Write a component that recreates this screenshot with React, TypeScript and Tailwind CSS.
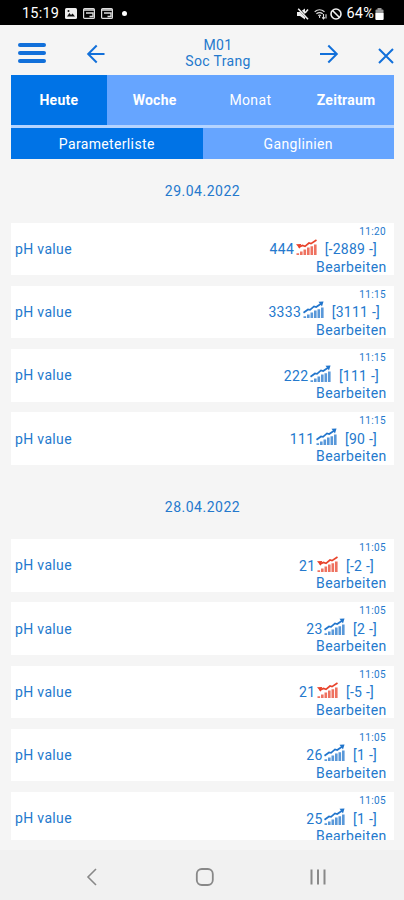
import React from 'react';

type Reading = { time: string; value: string; range: string; alert?: boolean; pad: string };

const days: { date: string; readings: Reading[] }[] = [
  {
    date: '29.04.2022',
    readings: [
      { time: '11:20', value: '444', range: '[-2889 -]', alert: true, pad: 'pr-[17px]' },
      { time: '11:15', value: '3333', range: '[3111 -]', pad: 'pr-[14px]' },
      { time: '11:15', value: '222', range: '[111 -]', pad: 'pr-[15px]' },
      { time: '11:15', value: '111', range: '[90 -]', pad: 'pr-[17px]' },
    ],
  },
  {
    date: '28.04.2022',
    readings: [
      { time: '11:05', value: '21', range: '[-2 -]', alert: true, pad: 'pr-[20px]' },
      { time: '11:05', value: '23', range: '[2 -]', pad: 'pr-[17px]' },
      { time: '11:05', value: '21', range: '[-5 -]', alert: true, pad: 'pr-[20px]' },
      { time: '11:05', value: '26', range: '[1 -]', pad: 'pr-[17px]' },
      { time: '11:05', value: '25', range: '[1 -]', pad: 'pr-[17px]' },
    ],
  },
];

function TrendIcon({ alert }: { alert?: boolean }) {
  return (
    <svg
      viewBox="0 0 21 18"
      className={`-mt-[4px] h-[18px] w-[21px] shrink-0 ${alert ? 'text-[#e8432b]' : 'text-[#2175cc]'}`}
      fill="currentColor"
    >
      <path
        d="M.5 15.3h2.6V17H.5zM4 13.5h2.6V17H4zM7.500 11.5h2.600V17H7.500zM11 9.500h2.600V17H11zM14.500 8.200h2.600V17h-2.600zM18 6.500h2.600V17H18z"
        opacity=".75"
      />
      {alert ? (
        <>
          <path d="M2.500 9.200 6.500 7.500 9 8.300 13 5l2 .6L20.500 2" fill="none" stroke="currentColor" strokeWidth="1.700" />
          <path d="M0 6.200 5.200 6l-1.400 4.800z" />
        </>
      ) : (
        <>
          <path d="M.5 11.800 5 8.500l2 .3 4-3.400 2.200.6L18 2.700" fill="none" stroke="currentColor" strokeWidth="1.700" />
          <path d="M15.500.8 20.500.6 19 5.500z" />
        </>
      )}
    </svg>
  );
}

function ReadingCard({ reading }: { reading: Reading }) {
  return (
    <div className="flex h-[52.5px] shrink-0 items-center justify-between bg-white pl-1 text-sm tracking-[0.35px] text-[#2479cd]">
      <span>pH value</span>
      <div className="flex h-full flex-col items-end">
        <span className="mr-2 mt-[3px] text-[10px] leading-[12px]">{reading.time}</span>
        <div className={`mt-[2.500px] flex h-[18px] items-center leading-[18px] ${reading.pad}`}>
          <span>{reading.value}</span>
          <span className="ml-[1.500px] mr-2 flex">
            <TrendIcon alert={reading.alert} />
          </span>
          <span className="tracking-[0.250px]">{reading.range}</span>
        </div>
        <span className="mr-[7.500px] -mt-[0.500px] leading-[18px]">Bearbeiten</span>
      </div>
    </div>
  );
}

function StatusBar() {
  return (
    <div className="flex h-[25px] shrink-0 items-center bg-black pl-[22px] pr-5 pt-[2px] text-white">
      <span className="w-[43px] text-[14.500px] tracking-[0.200px]">15:19</span>
      <svg viewBox="0 0 12 11" className="h-[11px] w-3">
        <rect width="12" height="11" rx="1.500" fill="#eee" />
        <path d="M2 8.500 4.400 5 6 7l1.600-1.600L10 8.500z" fill="#111" />
        <circle cx="3.500" cy="3" r="1" fill="#111" />
      </svg>
      {[0, 1].map((i) => (
        <svg key={i} viewBox="0 0 12 11" className="ml-[6px] h-[11px] w-3">
          <rect x=".6" y=".6" width="10.800" height="9.800" rx="1" fill="none" stroke="#ddd" strokeWidth="1.200" />
          <path d="M1 2h10M3 5h7v3.500H6.500" stroke="#ddd" strokeWidth="1.400" fill="none" />
        </svg>
      ))}
      <span className="ml-[9px] size-[5px] rounded-full bg-white" />
      <div className="ml-auto flex items-center">
        <svg viewBox="0 0 12 12" className="h-3 w-3">
          <path d="M0 4h3l5-3.500v11L3 8H0z" fill="#eee" />
          <path d="m1 0 10 11" stroke="#000" strokeWidth="2" />
          <path d="m1.200.8 9.800 10.400M8 5l3-3.500" stroke="#eee" strokeWidth="1.600" />
        </svg>
        <svg viewBox="0 0 14 12" className="ml-[5px] h-3 w-[14px]" fill="none" stroke="#ddd">
          <path d="M.7 3.700Q5.500-.2 10.500 3.700M2.400 5.700q3.100-2.300 6.300 0M4.200 7.600q1.400-1 2.800 0" strokeWidth="1.200" />
          <path d="M5.600 8v2M9.500 6v4.500m-1.300-1.200 1.300 1.500 1.300-1.500M12 10.500V6.200" strokeWidth="1.100" />
        </svg>
        <svg viewBox="0 0 12 12" className="ml-[2px] h-3 w-3" fill="none" stroke="#eee" strokeWidth="1.600">
          <circle cx="6" cy="6" r="5" />
          <path d="m2.500 2.500 7 7" />
        </svg>
        <span className="ml-1 text-[14.500px] tracking-[0.200px]">64%</span>
        <svg viewBox="0 0 9 12" className="ml-[1px] h-3 w-[9px]">
          <rect x=".5" y="1.500" width="8" height="10.500" rx="1" fill="#999" />
          <path d="M.5 5h8v6q0 1-1 1h-6q-1 0-1-1z" fill="#fff" />
          <rect x="2.500" y="0" width="4" height="2" fill="#999" />
        </svg>
      </div>
    </div>
  );
}

function Header() {
  return (
    <div className="grid h-[50px] shrink-0 grid-cols-[86px_36px_1fr_36px_54px] items-center text-[#1270da]">
      <div className="mt-[6px] ml-[18px] flex flex-col gap-[3.600px]">
        <span className="h-[4.200px] w-7 rounded-full bg-current" />
        <span className="h-[4.200px] w-7 rounded-full bg-current" />
        <span className="h-[4.200px] w-7 rounded-full bg-current" />
      </div>
      <svg viewBox="0 0 20 20" className="mt-[7px] size-5" fill="none" stroke="currentColor" strokeWidth="2">
        <path d="M18.500 10H2.500M10.700 1.500 2.200 10l8.500 8.500" />
      </svg>
      <div className="mt-[6px] text-center text-sm leading-4 tracking-[0.350px] text-[#2479cd]">
        <div>M01</div>
        <div>Soc Trang</div>
      </div>
      <svg viewBox="0 0 20 20" className="mt-[8px] ml-[5px] size-5" fill="none" stroke="currentColor" strokeWidth="2">
        <path d="M1 10h16.500M9.300 1.500l8.500 8.500-8.500 8.500" />
      </svg>
      <svg viewBox="0 0 16 16" className="mt-[11px] ml-[27.500px] size-4" fill="none" stroke="currentColor" strokeWidth="2">
        <path d="m1 1 14 14M15 1 1 15" />
      </svg>
    </div>
  );
}

export default function App() {
  return (
    <div className="flex h-[900px] w-[404px] flex-col overflow-hidden bg-[#f5f5f5] font-[Roboto,sans-serif]">
      <StatusBar />
      <Header />
      <div className="mr-[10px] ml-[11px] shrink-0 bg-[#b5d4ff] text-sm text-white">
        <div className="grid h-[50px] grid-cols-4 bg-[#66a5ff] font-bold tracking-[0.250px]">
          <div className="flex items-center justify-center bg-[#0073e6]">Heute</div>
          <div className="flex items-center justify-center">Woche</div>
          <div className="flex items-center justify-center font-normal tracking-[0.350px]">Monat</div>
          <div className="flex items-center justify-center">Zeitraum</div>
        </div>
        <div className="mt-[3px] grid h-[31px] grid-cols-2 bg-[#66a5ff] tracking-[0.350px]">
          <div className="flex items-center justify-center bg-[#0073e6]">Parameterliste</div>
          <div className="flex items-center justify-center">Ganglinien</div>
        </div>
      </div>
      <div className="mr-[10px] ml-[11px] flex h-[681px] shrink-0 flex-col overflow-hidden">
        {days.map((day) => (
          <section key={day.date} className="shrink-0">
            <h2 className="flex h-[63.500px] items-center justify-center text-sm tracking-[0.500px] text-[#2479cd]">
              {day.date}
            </h2>
            <div className="mb-[10.750px] flex flex-col gap-[10.750px]">
              {day.readings.map((reading, i) => (
                <ReadingCard key={i} reading={reading} />
              ))}
            </div>
          </section>
        ))}
      </div>
      <div className="mt-[10px] flex flex-1 items-center bg-[#f1f1f1] pt-[3px]">
        <svg viewBox="0 0 404 20" className="h-5 w-full" fill="none" stroke="#888">
          <path d="m96 2-8 8 8 8" strokeWidth="1.600" />
          <rect x="196.800" y="2" width="16" height="16" rx="5" strokeWidth="1.800" />
          <path d="M311.500 2.500v15M318 2.500v15M324.500 2.500v15" strokeWidth="2" />
        </svg>
      </div>
    </div>
  );
}
